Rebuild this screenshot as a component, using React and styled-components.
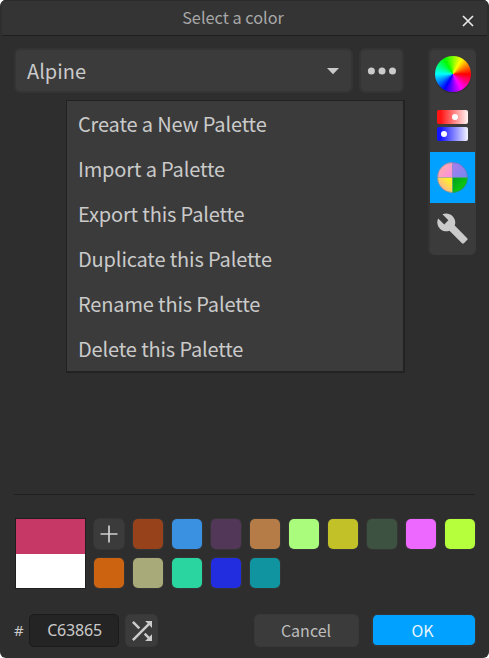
import React from "react";
import styled, { createGlobalStyle } from "styled-components";
import { MdBuild, MdShuffle } from "react-icons/md";

const GlobalStyle = createGlobalStyle`
  * { box-sizing: border-box; }
  body { margin: 0; background: #fff; }
  button, input { font: inherit; color: inherit; margin: 0; padding: 0; border: 0; }
`;

const Window = styled.div`
  width: 489px;
  height: 658px;
  display: flex;
  flex-direction: column;
  border-radius: 6px;
  overflow: hidden;
  background: #2e2e2e;
  color: #cacaca;
  font-family: "Noto Sans CJK SC", "Noto Sans", sans-serif;
`;

const TitleBar = styled.header`
  height: 36px;
  flex: none;
  margin: 0 2px;
  padding-right: 13px;
  display: grid;
  grid-template-columns: 1fr auto 1fr;
  align-items: center;
  background: #343434;
  border-top: 1px solid #2a2a2a;
  border-bottom: 1px solid #1f1f1f;
`;

const Title = styled.h1`
  grid-column: 2;
  margin: 0 10px 0 0;
  font-size: 16.3px;
  font-weight: 400;
  line-height: 32px;
  padding-bottom: 2px;
  color: #a8a8a8;
`;

const CloseButton = styled.button`
  justify-self: end;
  width: 12px;
  height: 12px;
  margin-top: 6px;
  display: grid;
  background: none;
  color: #e6e6e6;
`;

const Body = styled.main`
  height: 458px;
  flex: none;
  padding: 12px 13px 0 14px;
  display: flex;
  justify-content: space-between;
`;

const PaletteBar = styled.div`
  position: relative;
  height: 45px;
  display: flex;
  gap: 6px;
`;

const Control = styled.button`
  width: ${(p) => p.$width}px;
  height: 45px;
  display: flex;
  align-items: center;
  justify-content: ${(p) => (p.$spread ? "space-between" : "center")};
  padding: ${(p) => (p.$spread ? "1px 11px 0 11px" : "1px 0 0")};
  border: 2px solid #343434;
  border-radius: 6px;
  background: #3b3b3b;
  font-size: 20px;
  line-height: 30px;
`;

const Menu = styled.ul`
  position: absolute;
  top: 52px;
  left: 52px;
  width: 339px;
  height: 273px;
  margin: 0;
  padding: 0;
  list-style: none;
  background: #3b3b3b;
  border: solid #222;
  border-width: 1px 2px 2px 1px;
`;

const MenuItem = styled.li`
  height: 45px;
  padding-left: 11px;
  font-size: 20px;
  letter-spacing: -0.15px;
  line-height: 45px;
  white-space: nowrap;
`;

const ModeBar = styled.nav`
  width: 48px;
  height: 207px;
  padding: 2px 1px 1px 2px;
  display: grid;
  grid-template-rows: repeat(4, 51px);
  border-radius: 6px;
  background: #3b3b3b;
  box-shadow: inset 1px 1px 0 1px #343434;
`;

const Mode = styled.button`
  display: grid;
  place-items: center;
  background: ${(p) => (p.$active ? "#00a1ff" : "none")};
`;

const Wheel = styled.div`
  width: 36px;
  height: 36px;
  margin-top: -3px;
  border-radius: 50%;
  background: conic-gradient(from 90deg, #f00, #f0f, #00f, #0ff, #0f0, #ff0, #f00);
  box-shadow: 0 1px 1px #2228;
`;

const Sliders = styled.div`
  display: grid;
  gap: 3px;
  margin-top: -2px;
`;

const MiniSlider = styled.div`
  width: 31px;
  height: 14px;
  padding-left: ${(p) => p.$at}px;
  display: flex;
  align-items: center;
  border-radius: 2px;
  background: linear-gradient(90deg, ${(p) => p.$color} 12%, ${(p) => p.$end} 100%);

  &::before {
    content: "";
    width: 6px;
    height: 6px;
    border-radius: 50%;
    background: #fff;
  }
`;

const Divider = styled.hr`
  flex: none;
  width: 461px;
  height: 1px;
  margin: 0 14px 23px;
  border: 0;
  background: #202020;
`;

const Colors = styled.section`
  height: 71px;
  flex: none;
  padding-left: 15px;
  display: flex;
  gap: 8px;
`;

const Preview = styled.div`
  width: 71px;
  height: 71px;
  border: 1px solid #1f1f1f;
  background: linear-gradient(#c63865 35px, #fff 35px);
`;

const SwatchGrid = styled.div`
  padding-top: 1px;
  display: grid;
  grid-template-columns: repeat(10, 30px);
  grid-template-rows: repeat(2, 30px);
  gap: 9px;
`;

const Swatch = styled.button`
  display: grid;
  place-items: center;
  border-radius: 5px;
  background: ${(p) => p.$color};
  box-shadow: 0 0 0 1px #353535;
`;

const Footer = styled.footer`
  height: 33px;
  flex: none;
  margin-top: 25px;
  padding: 0 13px 0 14px;
  display: flex;
  align-items: center;
  font-size: 16px;
`;

const Hash = styled.label`
  width: 15px;
  padding-bottom: 1px;
  font-family: "Noto Sans", sans-serif;
  font-size: 15px;
  line-height: 30px;
`;

const HexInput = styled.input`
  width: 90px;
  height: 33px;
  padding: 0 0 1px 1px;
  text-align: center;
  border: 1px solid #1b1b1b;
  border-radius: 5px;
  background: #242424;
  font-family: "Noto Sans", sans-serif;
  font-size: 16px;
  letter-spacing: -0.2px;
`;

const Button = styled.button`
  width: ${(p) => p.$width}px;
  height: 33px;
  margin-left: ${(p) => p.$gap}px;
  padding: 0 1px 1px 0;
  display: grid;
  place-items: center;
  line-height: 28px;
  border: 1px solid #383838;
  border-radius: 5px;
  background: #3b3b3b;
  color: #bebebe;
`;

const PrimaryButton = styled(Button)`
  padding: 0 3px 0 0;
  border: solid #343434;
  border-width: 1px 1px 2px 2px;
  border-radius: 6px;
  background: #00a1ff;
  color: #e8f5ff;
`;

const IconButton = styled(Button)`
  padding: 0 0 0 1px;
`;

const MENU = [
  "Create a New Palette",
  "Import a Palette",
  "Export this Palette",
  "Duplicate this Palette",
  "Rename this Palette",
  "Delete this Palette",
];

const SWATCHES = [
  "#97421a", "#3a91e2", "#533758", "#b57c48", "#a9fc7c", "#c2c228", "#3d5241", "#ed68ff", "#b5ff3c",
  "#cc6310", "#a9aa79", "#2bd59f", "#232de0", "#10949f",
];

function QuarterWheel() {
  return (
    <svg width="31" height="31" viewBox="0 0 31 31">
      <defs>
        <linearGradient id="pink" x1="0" y1="0" x2="1" y2="1">
          <stop offset=".2" stopColor="#ffb0a8" /><stop offset="1" stopColor="#f98ae8" />
        </linearGradient>
        <linearGradient id="violet" x1="0" y1="0" x2="1" y2="1">
          <stop stopColor="#aa7cef" /><stop offset="1" stopColor="#7788ee" />
        </linearGradient>
        <linearGradient id="gold" x1="0" y1="1" x2="1" y2="0">
          <stop offset=".2" stopColor="#ffaaa0" /><stop offset=".8" stopColor="#fff02c" />
        </linearGradient>
        <linearGradient id="leaf" x1="0" y1="0" x2="1" y2="1">
          <stop stopColor="#00a020" /><stop offset=".6" stopColor="#0cc410" /><stop offset="1" stopColor="#0a9c30" />
        </linearGradient>
      </defs>
      <path d="M15.5 15.5H.3A15.2 15.2 0 0 1 15.5.3Z" fill="url(#pink)" />
      <path d="M15.5 15.5V.3A15.2 15.2 0 0 1 30.7 15.5Z" fill="url(#violet)" />
      <path d="M15.5 15.5V30.7A15.2 15.2 0 0 1 .3 15.5Z" fill="url(#gold)" />
      <path d="M15.5 15.5H30.7A15.2 15.2 0 0 1 15.5 30.7Z" fill="url(#leaf)" />
      <path d="M15.5 .5V30.5M.5 15.5H30.5" stroke="#9b8f8e" strokeOpacity=".35" />
      <circle cx="15.5" cy="15.5" r="15" fill="none" stroke="#4676a0" strokeOpacity=".5" />
    </svg>
  );
}

export default function App() {
  return (
    <Window>
      <GlobalStyle />
      <TitleBar>
        <Title>Select a color</Title>
        <CloseButton aria-label="Close">
          <svg width="12" height="12" viewBox="0 0 12 12" stroke="currentColor" strokeWidth="1.7">
            <path d="M1 1 11 11M11 1 1 11" />
          </svg>
        </CloseButton>
      </TitleBar>
      <Body>
        <PaletteBar>
          <Control $width={339} $spread>
            Alpine
            <svg width="14" height="8" viewBox="0 0 14 8" fill="currentColor"><path d="M1 1h12L7 7.2Z" /></svg>
          </Control>
          <Control $width={45} aria-label="Palette actions">
            <svg width="30" height="8" viewBox="0 0 30 8" fill="currentColor">
              <circle cx="4.4" cy="4" r="3.5" /><circle cx="15" cy="4" r="3.5" /><circle cx="25.5" cy="4" r="3.5" />
            </svg>
          </Control>
          <Menu>
            {MENU.map((label) => <MenuItem key={label}>{label}</MenuItem>)}
          </Menu>
        </PaletteBar>
        <ModeBar>
          <Mode aria-label="Color wheel"><Wheel /></Mode>
          <Mode aria-label="Sliders">
            <Sliders>
              <MiniSlider $color="#ff1414" $end="#fff4f4" $at={15} />
              <MiniSlider $color="#1414ff" $end="#f4f4ff" $at={4} />
            </Sliders>
          </Mode>
          <Mode aria-label="Palettes" $active><QuarterWheel /></Mode>
          <Mode aria-label="Settings"><MdBuild size={33} /></Mode>
        </ModeBar>
      </Body>
      <Divider />
      <Colors>
        <Preview />
        <SwatchGrid>
          <Swatch $color="#3b3b3b" aria-label="Add color">
            <svg width="18" height="18" viewBox="0 0 18 18" stroke="#d0d0d0" strokeWidth="1.7">
              <path d="M9 .5V17.5M.5 9H17.5" />
            </svg>
          </Swatch>
          {SWATCHES.map((color) => <Swatch key={color} $color={color} aria-label={color} />)}
        </SwatchGrid>
      </Colors>
      <Footer>
        <Hash htmlFor="hex">#</Hash>
        <HexInput id="hex" defaultValue="C63865" />
        <IconButton $width={33} $gap={6} aria-label="Random color"><MdShuffle size={30} color="#cacaca" /></IconButton>
        <Button $width={105} $gap={96}>Cancel</Button>
        <PrimaryButton $width={105} $gap={12}>OK</PrimaryButton>
      </Footer>
    </Window>
  );
}
